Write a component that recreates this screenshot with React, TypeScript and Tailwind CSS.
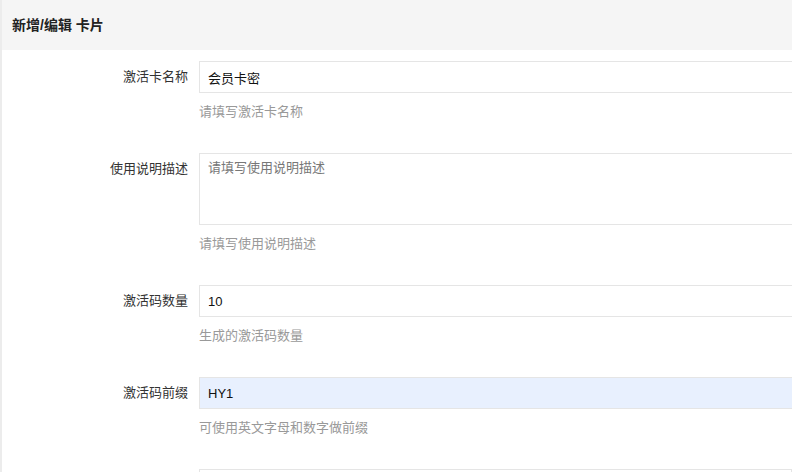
import * as React from 'react';

const font = { fontFamily: '"Liberation Sans", "Noto Sans CJK SC", sans-serif' };

type Field = {
  label: string;
  value?: string;
  placeholder?: string;
  help: string;
  multiline?: boolean;
  autofill?: boolean;
};

const fields: Field[] = [
  { label: '激活卡名称', value: '会员卡密', help: '请填写激活卡名称' },
  { label: '使用说明描述', placeholder: '请填写使用说明描述', help: '请填写使用说明描述', multiline: true },
  { label: '激活码数量', value: '10', help: '生成的激活码数量' },
  { label: '激活码前缀', value: 'HY1', help: '可使用英文字母和数字做前缀', autofill: true },
];

function FormRow({ field }: { field: Field }) {
  return (
    <div className="flex mb-[32px]">
      {/* label */}
      <div className="w-[199px] shrink-0 pr-[11px] pt-[7px] text-right text-[13px] leading-[18px] text-[#333]">
        {field.label}
      </div>

      {/* control + help */}
      <div className="w-[700px] shrink-0">
        {field.multiline ? (
          <textarea
            readOnly
            placeholder={field.placeholder}
            className="block w-full h-[72px] resize-none border border-[#e5e5e5] bg-white px-[8px] pt-[4px] pb-[6px] text-[13px] leading-[20px] text-[#333] placeholder:text-[#777] outline-none"
          />
        ) : (
          <input
            readOnly
            value={field.value}
            className={
              'block w-full h-[32px] border border-[#e5e5e5] px-[8px] text-[13px] text-[#111] outline-none ' +
              (field.autofill ? 'bg-[#e8f0fe]' : 'bg-white')
            }
          />
        )}
        <div className="mt-[10px] text-[13px] leading-[18px] text-[#999]">{field.help}</div>
      </div>
    </div>
  );
}

export default function App() {
  return (
    <div className="w-[792px] h-[472px] overflow-hidden bg-white border-l-2 border-[#ececec]" style={font}>
      {/* Header */}
      <div className="h-[50px] bg-[#f5f5f5] flex items-center px-[10px]">
        <span className="text-[14px] font-semibold text-[#222]">新增/编辑 卡片</span>
      </div>

      {/* Form */}
      <div className="pt-[11px] -ml-[2px]">
        {fields.map((f) => (
          <FormRow key={f.label} field={f} />
        ))}
        <div className="flex">
          <div className="w-[199px] shrink-0" />
          <div className="w-[700px] h-[32px] border border-[#e5e5e5]" />
        </div>
      </div>
    </div>
  );
}
